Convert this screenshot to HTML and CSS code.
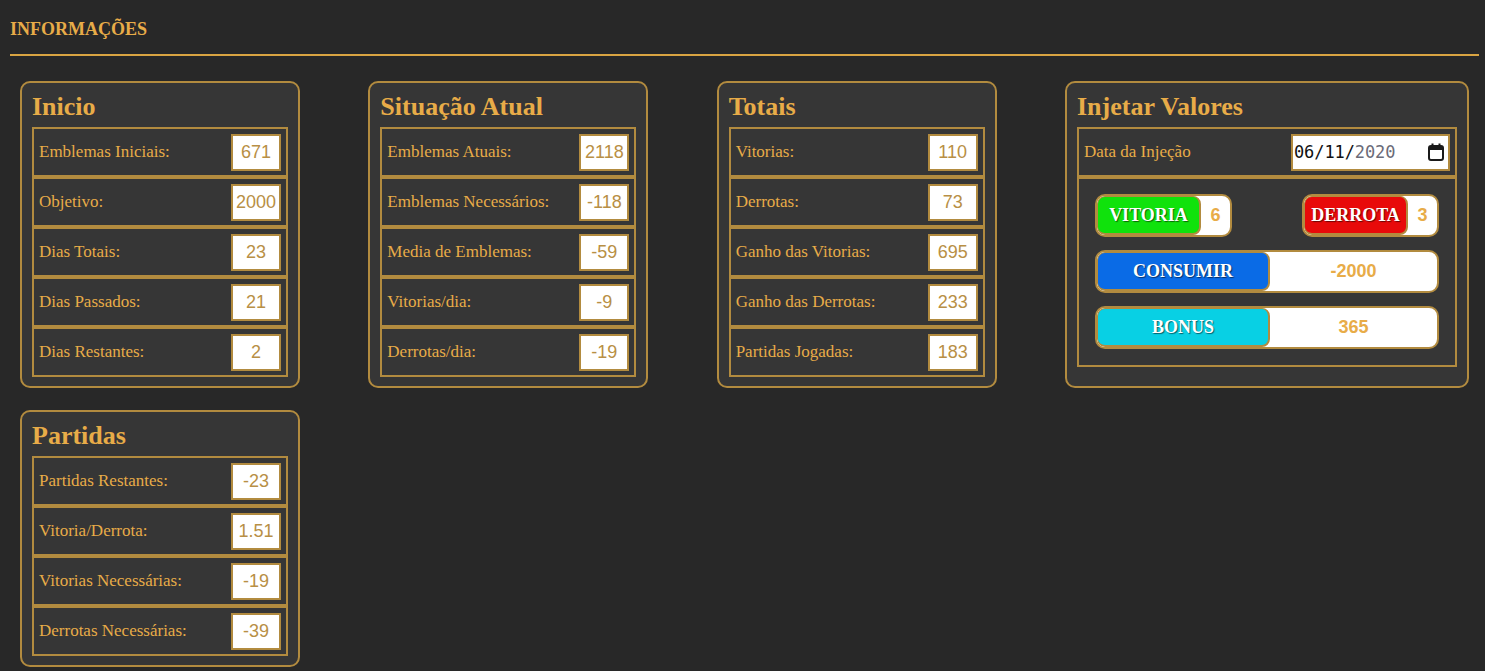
FILE: index.html
```html
<!DOCTYPE html>
<html lang="pt-BR">
<head>
<meta charset="utf-8">
<title>Informações</title>
<link rel="stylesheet" href="styles.css">
</head>
<body>
<div class="page">
  <h1 class="page-title">INFORMAÇÕES</h1>
  <div class="cards">
    <section class="card">
      <h2 class="card-title">Inicio</h2>
      <div class="rows">
        <div class="row"><span class="label">Emblemas Iniciais:</span><input class="value" readonly value="671"></div>
        <div class="row"><span class="label">Objetivo:</span><input class="value" readonly value="2000"></div>
        <div class="row"><span class="label">Dias Totais:</span><input class="value" readonly value="23"></div>
        <div class="row"><span class="label">Dias Passados:</span><input class="value" readonly value="21"></div>
        <div class="row"><span class="label">Dias Restantes:</span><input class="value" readonly value="2"></div>
      </div>
    </section>
    <section class="card">
      <h2 class="card-title">Situação Atual</h2>
      <div class="rows">
        <div class="row"><span class="label">Emblemas Atuais:</span><input class="value" readonly value="2118"></div>
        <div class="row"><span class="label">Emblemas Necessários:</span><input class="value" readonly value="-118"></div>
        <div class="row"><span class="label">Media de Emblemas:</span><input class="value" readonly value="-59"></div>
        <div class="row"><span class="label">Vitorias/dia:</span><input class="value" readonly value="-9"></div>
        <div class="row"><span class="label">Derrotas/dia:</span><input class="value" readonly value="-19"></div>
      </div>
    </section>
    <section class="card">
      <h2 class="card-title">Totais</h2>
      <div class="rows">
        <div class="row"><span class="label">Vitorias:</span><input class="value" readonly value="110"></div>
        <div class="row"><span class="label">Derrotas:</span><input class="value" readonly value="73"></div>
        <div class="row"><span class="label">Ganho das Vitorias:</span><input class="value" readonly value="695"></div>
        <div class="row"><span class="label">Ganho das Derrotas:</span><input class="value" readonly value="233"></div>
        <div class="row"><span class="label">Partidas Jogadas:</span><input class="value" readonly value="183"></div>
      </div>
    </section>
    <section class="card card-wide">
      <h2 class="card-title">Injetar Valores</h2>
      <div class="rows">
        <div class="row">
          <span class="label">Data da Injeção</span>
          <div class="date-field">
            <span class="date-text"><span class="date-set">06/11/</span><span class="date-year">2020</span></span>
            <svg class="cal-icon" width="16" height="18" viewBox="0 0 16 18" aria-hidden="true">
              <rect x="1" y="3" width="14" height="14" rx="2" fill="none" stroke="#1a1a1a" stroke-width="2"/>
              <rect x="1" y="3" width="14" height="4" fill="#1a1a1a"/>
              <rect x="3.5" y="0.5" width="2" height="3.5" fill="#1a1a1a"/>
              <rect x="10.5" y="0.5" width="2" height="3.5" fill="#1a1a1a"/>
            </svg>
          </div>
        </div>
        <div class="row row-actions">
          <div class="pair">
            <div class="pill pill-small">
              <button class="pill-btn btn-green" type="button">VITORIA</button>
              <span class="pill-value">6</span>
            </div>
            <div class="pill pill-small">
              <button class="pill-btn btn-red" type="button">DERROTA</button>
              <span class="pill-value">3</span>
            </div>
          </div>
          <div class="pill pill-full">
            <button class="pill-btn btn-blue" type="button">CONSUMIR</button>
            <span class="pill-value">-2000</span>
          </div>
          <div class="pill pill-full">
            <button class="pill-btn btn-cyan" type="button">BONUS</button>
            <span class="pill-value">365</span>
          </div>
        </div>
      </div>
    </section>
    <section class="card">
      <h2 class="card-title">Partidas</h2>
      <div class="rows">
        <div class="row"><span class="label">Partidas Restantes:</span><input class="value" readonly value="-23"></div>
        <div class="row"><span class="label">Vitoria/Derrota:</span><input class="value" readonly value="1.51"></div>
        <div class="row"><span class="label">Vitorias Necessárias:</span><input class="value" readonly value="-19"></div>
        <div class="row"><span class="label">Derrotas Necessárias:</span><input class="value" readonly value="-39"></div>
      </div>
    </section>
  </div>
</div>
</body>
</html>
```

FILE: styles.css
```css
* { box-sizing: border-box; }

body {
  margin: 0;
  background: #282828;
  font-family: "Liberation Serif", "Times New Roman", serif;
  color: #e8ac48;
}

.page {
  padding: 0 6px 0 10px;
}

.page-title {
  margin: 0;
  padding: 18px 0 14px;
  font-size: 18px;
  line-height: 22px;
  font-weight: bold;
  color: #e8ac48;
  border-bottom: 2px solid #d9a442;
}

.cards {
  display: flex;
  flex-wrap: wrap;
  justify-content: space-between;
  align-items: stretch;
  row-gap: 22px;
  padding: 25px 10px 0 10px;
}

.card {
  width: 280px;
  background: #363636;
  border: 2px solid #b28b3f;
  border-radius: 10px;
  padding: 9px 10px 9px;
}

.card-wide {
  width: 404px;
}

.card-title {
  margin: 0 0 5px;
  font-size: 26px;
  line-height: 30px;
  font-weight: bold;
  color: #e8ac48;
}

.rows {
  display: flex;
  flex-direction: column;
}

.row {
  height: 50px;
  border: 2px solid #b28b3f;
  display: flex;
  align-items: center;
  justify-content: space-between;
  padding: 0 5px;
}

.label {
  font-size: 17px;
  color: #e8ac48;
}

.value {
  width: 50px;
  height: 37px;
  border: 2px solid #b28b3f;
  background: #fff;
  padding: 0;
  margin: 0;
  text-align: center;
  font-family: "Liberation Sans", Arial, sans-serif;
  font-size: 18px;
  color: #b88f45;
  outline: none;
}

.date-field {
  width: 159px;
  height: 37px;
  border: 2px solid #b28b3f;
  background: #fff;
  display: flex;
  align-items: center;
  justify-content: space-between;
  padding: 0 4px 0 1px;
}

.date-text {
  font-family: "DejaVu Sans Mono", "Liberation Mono", monospace;
  font-size: 17px;
  letter-spacing: -0.1px;
}

.date-set { color: #111; }
.date-year { color: #6b6b78; }

.cal-icon { display: block; }

.row-actions {
  height: 190px;
  flex-direction: column;
  align-items: stretch;
  justify-content: flex-start;
  gap: 13px;
  padding: 15px 16px 16px;
}

.pair {
  display: flex;
  justify-content: space-between;
}

.pill {
  display: flex;
  height: 43px;
  background: #fff;
  border: 2px solid #b28b3f;
  border-radius: 10px;
  overflow: hidden;
}

.pill-small { width: 137px; }
.pill-full { width: 100%; }

.pill-btn {
  border: 2px solid #b28b3f;
  border-left-width: 1px;
  border-top-width: 1px;
  border-radius: 8px;
  margin: 0;
  padding: 0;
  font-family: "Liberation Serif", "Times New Roman", serif;
  font-weight: bold;
  font-size: 18px;
  color: #fff;
  text-shadow: 1px 1px 1px rgba(0, 0, 0, 0.55);
  cursor: pointer;
}

.pill-small .pill-btn { width: 104px; }
.pill-full .pill-btn { width: 173px; }

.btn-green { background: #10e20c; }
.btn-red { background: #e80a0a; }
.btn-blue { background: #0a6be6; }
.btn-cyan { background: #08d0e4; }

.pill-value {
  flex: 1;
  display: flex;
  align-items: center;
  justify-content: center;
  font-family: "Liberation Sans", Arial, sans-serif;
  font-weight: bold;
  font-size: 18px;
  color: #e8ac48;
}
```
